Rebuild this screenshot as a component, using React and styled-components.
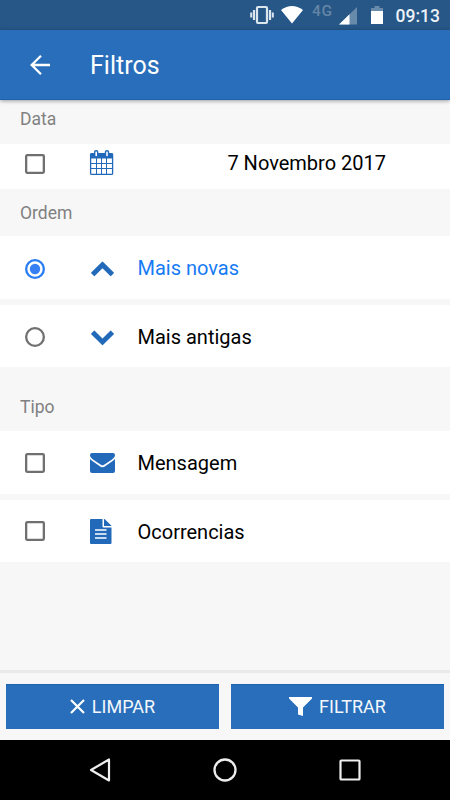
import React from "react";
import styled, { createGlobalStyle } from "styled-components";

const BLUE = "#286eba";
const ICON_BLUE = "#226ab9";

const GlobalStyle = createGlobalStyle`
  * { box-sizing: border-box; }
  body { margin: 0; background: #f7f7f7; }
  button { font: inherit; }
`;

const Screen = styled.div`
  width: 450px;
  height: 800px;
  display: flex;
  flex-direction: column;
  overflow: hidden;
  background: #f7f7f7;
  font-family: Roboto, sans-serif;
  color: #000;
`;

const Icon = styled.svg`
  display: block;
  flex: none;
  overflow: visible;
  margin-top: ${(p) => p.$shift || 0}px;
`;

const StatusBar = styled.div`
  flex: none;
  height: 30px;
  padding: 0 10px 0 250px;
  display: flex;
  align-items: center;
  background: #265787;
  color: #fff;
`;

const StatusIcons = styled.div`
  display: grid;
  grid-template-columns: 31px 31px 27px 32px 24.5px;
  align-items: start;
  height: 18px;
`;

const Network = styled.span`
  color: #6585a6;
  font-size: 15.5px;
  font-weight: 500;
  letter-spacing: 0.8px;
  line-height: 11px;
`;

const Clock = styled.span`
  font-size: 17.5px;
  font-weight: 500;
  line-height: 20px;
  color: #edf2f7;
  white-space: nowrap;
  margin-top: 1px;
`;

const AppBar = styled.header`
  flex: none;
  height: 70px;
  padding-left: 30px;
  display: flex;
  align-items: center;
  gap: 40px;
  background: ${BLUE};
  border-bottom: 1px solid #1c62b1;
  box-shadow: 0 1px 4px rgba(0, 0, 0, 0.38);
  z-index: 1;
`;

const Title = styled.h1`
  margin: 2px 0 0;
  color: #fff;
  font-size: 25px;
  font-weight: 400;
`;

const Content = styled.main`
  flex: 1;
  min-height: 0;
`;

const Section = styled.h2`
  margin: 0;
  height: ${(p) => p.$height}px;
  padding: ${(p) => p.$top}px 0 0 20px;
  color: #818181;
  font-size: 17.5px;
  font-weight: 400;
  line-height: 20px;
`;

const List = styled.div`
  display: grid;
  gap: 6px;
`;

const Row = styled.label`
  height: ${(p) => p.$height}px;
  padding: 0 64px 0 25px;
  display: grid;
  grid-template-columns: 65px 47.5px 1fr;
  align-items: center;
  background: #fff;
`;

const Label = styled.span`
  color: ${(p) => (p.$active ? "#177bf5" : "#000")};
  font-size: 20px;
  line-height: 24px;
  text-align: ${(p) => (p.$end ? "right" : "left")};
  padding-top: ${(p) => (p.$end || p.$raised ? 0 : 2)}px;
  margin-top: ${(p) => (p.$end ? -8 : 0)}px;
  white-space: nowrap;
`;

const Checkbox = ({ shift = 0 }) => (
  <Icon $shift={shift} width="20" height="20" viewBox="0 0 20 20">
    <rect x="1.15" y="1.15" width="17.7" height="17.7" rx="1" fill="none" stroke="#707070" strokeWidth="2.3" />
  </Icon>
);

const RadioMark = ({ checked }) => (
  <Icon $shift={2} width="20" height="20" viewBox="0 0 20 20">
    <circle cx="10" cy="10" r="8.85" fill="none" stroke={checked ? "#287cf3" : "#707070"} strokeWidth="2.3" />
    {checked && <circle cx="10" cy="10" r="5.2" fill="#3780f3" />}
  </Icon>
);

const Footer = styled.footer`
  flex: none;
  height: 70px;
  padding: 11px 6px;
  border-top: 3px solid #e9e9e9;
  display: grid;
  grid-template-columns: 1fr 1fr;
  gap: 12px;
`;

const Action = styled.button`
  height: 45px;
  padding: 0 0 2px;
  border: 0;
  border-top: 1px solid #1b64b4;
  display: flex;
  align-items: center;
  justify-content: center;
  gap: 7px;
  background: ${BLUE};
  color: #f4f8fc;
  font-size: 18px;
`;

const NavBar = styled.nav`
  flex: none;
  height: 60px;
  padding: 0 37px;
  display: grid;
  grid-template-columns: repeat(3, 1fr);
  place-items: center;
  background: #000;
`;

const Vibrate = () => (
  <Icon width="24" height="18" viewBox="0 0 24 18" fill="none" stroke="#dce6ef">
    <rect x="7" y="1" width="10" height="16" rx="1" strokeWidth="2.2" />
    <path d="M4 4v10M20 4v10" strokeWidth="2.2" />
    <path d="M1.2 6.5v5M22.8 6.5v5" strokeWidth="2" />
  </Icon>
);

const Wifi = () => (
  <Icon width="22" height="18" viewBox="0 0 22 18">
    <path d="M0 4Q11-4 22 4L11 17.5Z" fill="#fff" />
  </Icon>
);

const Signal = () => (
  <Icon width="18" height="19" viewBox="0 0 18 19">
    <path d="M18 1V18.5H0Z" fill="#688aab" />
    <path d="M10.5 8.3V18.5H0Z" fill="#fff" />
  </Icon>
);

const Battery = () => (
  <Icon width="12" height="18" viewBox="0 0 12 18">
    <path d="M3.5 0H8.500V2H12V7H0V2H3.500Z" fill="#688aab" />
    <path d="M0 5H12V18H0Z" fill="#fff" />
  </Icon>
);

const Back = () => (
  <Icon width="20" height="20" viewBox="0 0 20 20" fill="none" stroke="#fff" strokeWidth="2.3">
    <path d="M11 .8 1.7 10 11 19.2M1.700 10H20" />
  </Icon>
);

const Calendar = () => (
  <Icon $shift={-8} width="24" height="25" viewBox="0 0 24 25">
    <rect x=".6" y="3.6" width="22" height="20.8" rx="1" fill="#fff" stroke={ICON_BLUE} strokeWidth="1.3" />
    <path d="M.5 3.5H22.800V8.500H.5Z" fill={ICON_BLUE} />
    <path d="M6.5 8V24M11.500 8V24M16.500 8V24M1 13.500H22.500M1 18.500H22.500" stroke={ICON_BLUE} strokeWidth="1" />
    <rect x="4.7" y=".7" width="3" height="6.2" rx="1.3" fill="#fff" stroke={ICON_BLUE} strokeWidth="1.4" />
    <rect x="15.5" y=".7" width="3" height="6.2" rx="1.3" fill="#fff" stroke={ICON_BLUE} strokeWidth="1.4" />
  </Icon>
);

const Chevron = ({ down }) => (
  <Icon $shift={down ? 4 : 3} width="25" height="16" viewBox="0 0 25 16">
    <path
      d={
        down
          ? "M1.200 3.500 4 .7Q4.300.4 4.700.7L12.500 8.500 20.300.7Q20.700.4 21 .7L23.800 3.500Q24.100 3.900 23.800 4.200L12.900 15Q12.500 15.300 12.100 15L1.200 4.200Q.9 3.900 1.200 3.500Z"
          : "M1.200 11.500 12.100.7Q12.500.4 12.900.7L23.800 11.500Q24.100 11.900 23.800 12.200L21 15Q20.700 15.300 20.300 15L12.500 7.200 4.700 15Q4.300 15.300 4 15L1.200 12.200Q.9 11.900 1.200 11.500Z"
      }
      fill={ICON_BLUE}
    />
  </Icon>
);

const Mail = () => (
  <Icon width="25" height="20" viewBox="0 0 25 20" fill={ICON_BLUE}>
    <path d="M2 0H23Q25 0 25 2C25 4 23.500 5.400 22 6.400L14.500 11.600Q12.500 13.200 10.500 11.600L3 6.400C1.500 5.400 0 4 0 2Q0 0 2 0Z" />
    <path d="M0 6Q.7 6.800 2 7.700L9.500 12.900Q12.500 15.600 15.500 12.900L23 7.700Q24.300 6.800 25 6V18Q25 20 23 20H2Q0 20 0 18Z" />
  </Icon>
);

const Document = () => (
  <Icon width="22" height="25" viewBox="0 0 22 25" fill={ICON_BLUE}>
    <path d="M0 1Q0 0 1 0H12.500V7.500Q12.500 8.500 13.500 8.500H21.500V24Q21.500 25 20.500 25H1Q0 25 0 24Z" />
    <path d="M14 0Q15 .3 15.600.9L20.700 6Q21.300 6.600 21.500 7.100H14Z" />
    <path d="M5 11H16.500M5 15H16.500M5 19H16.500" stroke="#fff" strokeWidth="1.7" />
  </Icon>
);

const Clear = () => (
  <Icon $shift={1} width="15" height="15" viewBox="0 0 15 15" fill="none" stroke="#fff" strokeWidth="2.2">
    <path d="M1 1 14 14M14 1 1 14" />
  </Icon>
);

const Funnel = () => (
  <Icon $shift={1} width="23" height="19" viewBox="0 0 23 19">
    <path d="M0 0H23V1.600L14 10.500V19L9 17.500V10.500L0 1.600Z" fill="#fff" />
  </Icon>
);

const NavBack = () => (
  <Icon width="24" height="24" viewBox="0 0 24 24">
    <path d="M21 1.500V22.500L3 12Z" fill="none" stroke="#eee" strokeWidth="2.2" strokeLinejoin="round" />
  </Icon>
);

const NavHome = () => (
  <Icon width="24" height="24" viewBox="0 0 24 24">
    <circle cx="12" cy="12" r="10.5" fill="none" stroke="#eee" strokeWidth="2.3" />
  </Icon>
);

const NavRecent = () => (
  <Icon width="24" height="24" viewBox="0 0 24 24">
    <rect x="2.500" y="2.5" width="19" height="19" rx=".8" fill="none" stroke="#eee" strokeWidth="2.2" />
  </Icon>
);

export default function App() {
  return (
    <Screen>
      <GlobalStyle />
      <StatusBar>
        <StatusIcons>
          <Vibrate />
          <Wifi />
          <Network>4G</Network>
          <Signal />
          <Battery />
        </StatusIcons>
        <Clock>09:13</Clock>
      </StatusBar>
      <AppBar>
        <Back />
        <Title>Filtros</Title>
      </AppBar>
      <Content>
        <Section $height={44} $top={9}>Data</Section>
        <Row $height={45}>
          <Checkbox shift={-6} />
          <Calendar />
          <Label $end>7 Novembro 2017</Label>
        </Row>
        <Section $height={47} $top={14}>Ordem</Section>
        <List>
          <Row $height={63}>
            <RadioMark checked />
            <Chevron />
            <Label $active $raised>Mais novas</Label>
          </Row>
          <Row $height={62}>
            <RadioMark />
            <Chevron down />
            <Label>Mais antigas</Label>
          </Row>
        </List>
        <Section $height={64} $top={30}>Tipo</Section>
        <List>
          <Row $height={63}>
            <Checkbox />
            <Mail />
            <Label $raised>Mensagem</Label>
          </Row>
          <Row $height={62}>
            <Checkbox />
            <Document />
            <Label>Ocorrencias</Label>
          </Row>
        </List>
      </Content>
      <Footer>
        <Action>
          <Clear />
          LIMPAR
        </Action>
        <Action>
          <Funnel />
          FILTRAR
        </Action>
      </Footer>
      <NavBar>
        <NavBack />
        <NavHome />
        <NavRecent />
      </NavBar>
    </Screen>
  );
}
